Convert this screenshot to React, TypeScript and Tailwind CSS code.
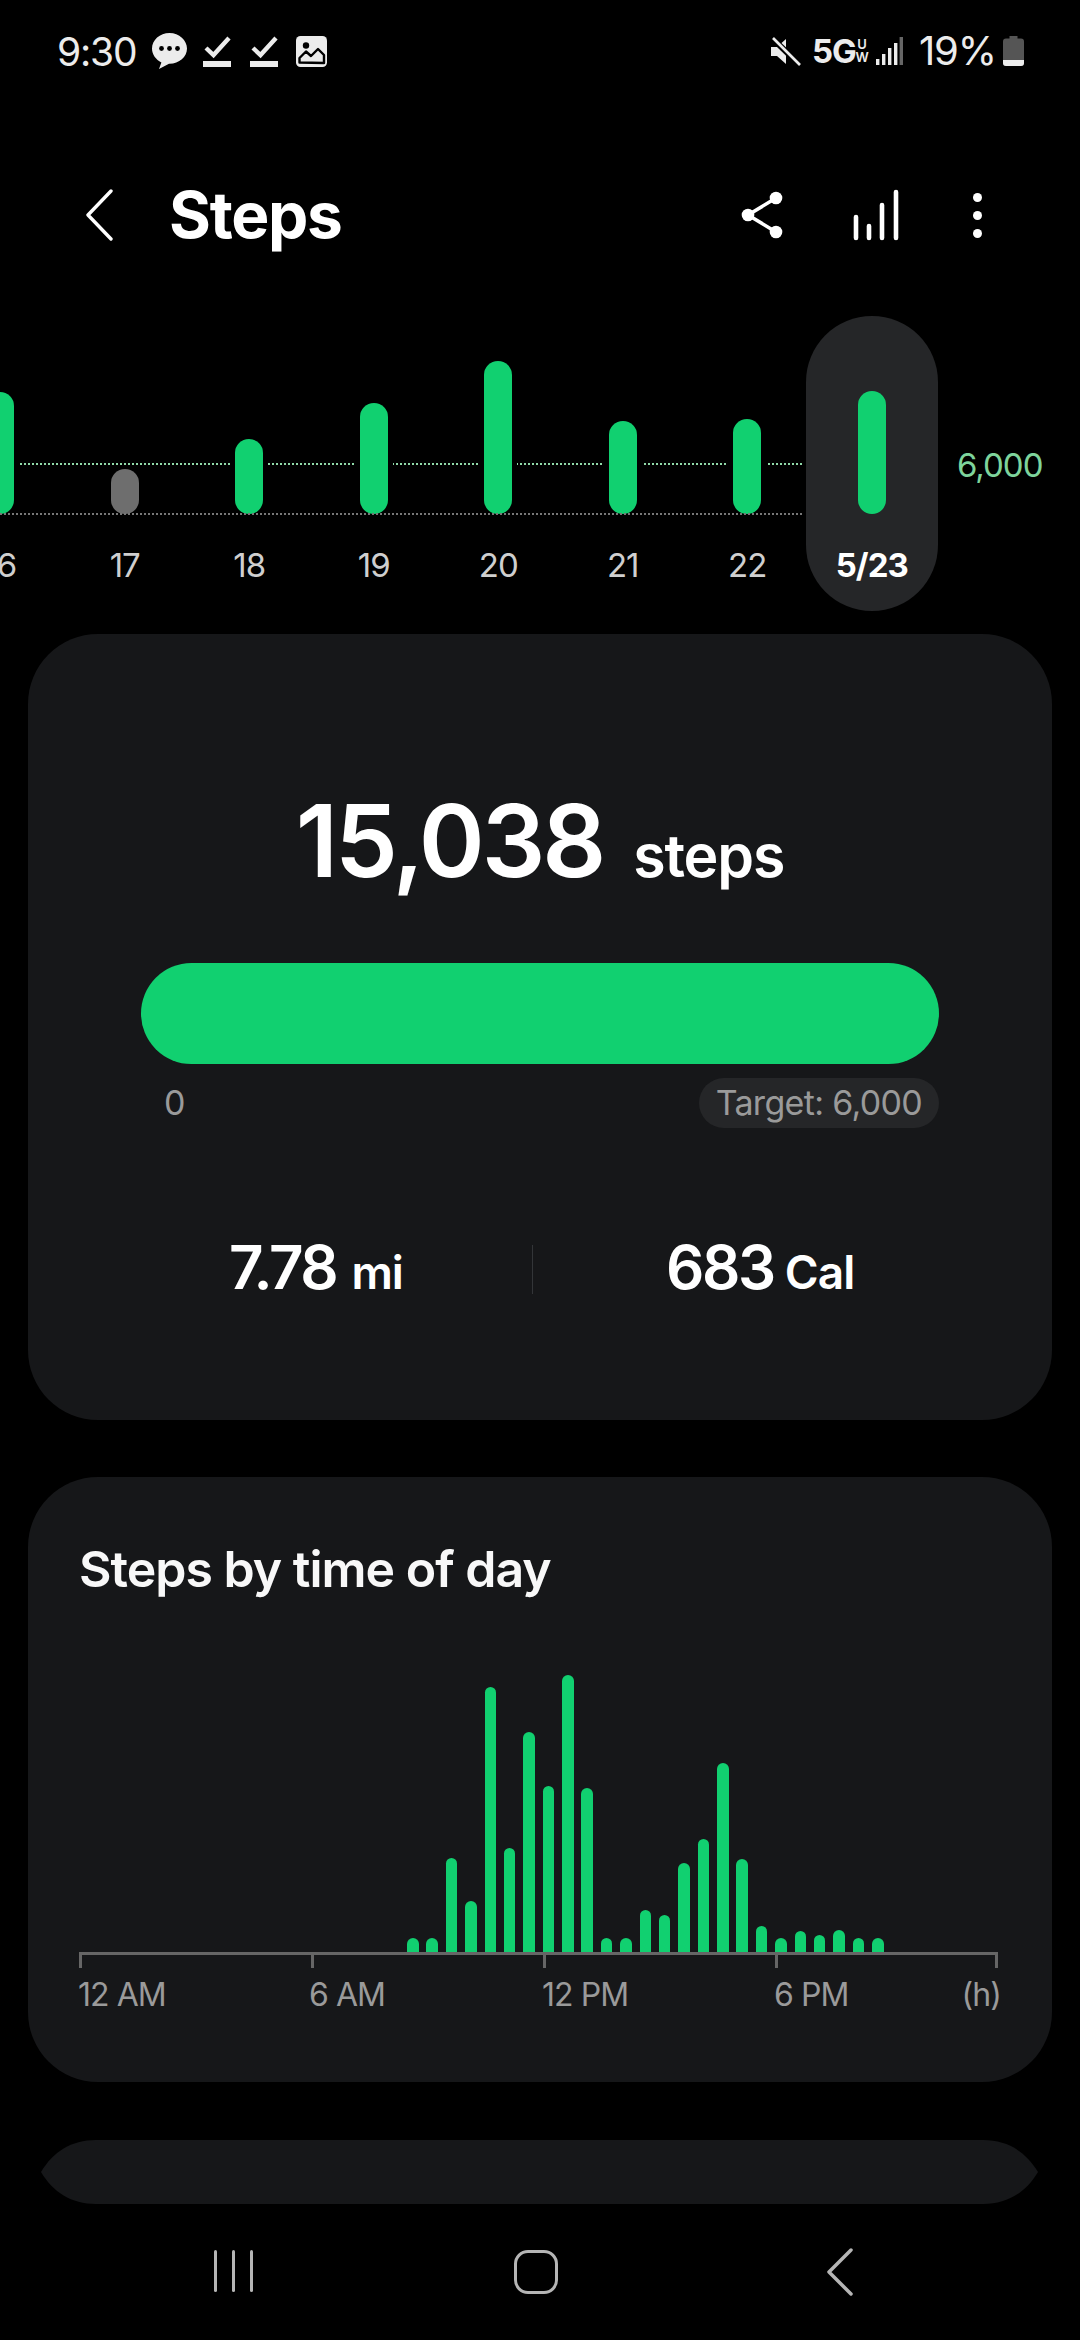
import React from 'react';

const dayBars = [
  { label: '16', top: 392 },
  { label: '17', top: 469, grey: true },
  { label: '18', top: 439 },
  { label: '19', top: 403 },
  { label: '20', top: 361 },
  { label: '21', top: 421 },
  { label: '22', top: 419 },
  { label: '5/23', top: 391, today: true },
];

const hourBars = [14, 14, 94, 51, 265, 104, 220, 166, 277, 164, 14, 14, 42, 37, 89, 113, 189, 93, 26, 14, 21, 17, 22, 14, 14];

const CheckIcon = ({ className }: { className?: string }) => (
  <svg width="28" height="32" viewBox="0 0 28 32" className={className}>
    <path d="M3 13l7.5 7L26 3" fill="none" stroke="#ececec" strokeWidth="4.4" />
    <rect y="26" width="28" height="6" fill="#ececec" />
  </svg>
);

const StatusBar = () => (
  <div className="h-[102px] pl-[57px] pr-[56px] flex items-center justify-between text-[#ececec]">
    <div className="flex items-center">
      <span className="text-[39px] leading-none tracking-[-0.03em] w-[80px]">9:30</span>
      <svg width="35" height="36" viewBox="0 0 35 36" className="ml-[15px]">
        <path d="M17.5 0C7.8 0 0 7 0 15.6c0 6 3.8 11.2 9.4 13.8L7 36l10-5.2c.2 0 .3 0 .5 0 9.7 0 17.5-6.9 17.5-15.2S27.2 0 17.5 0z" fill="#ececec" />
        <circle cx="9.5" cy="15.5" r="2.4" fill="#000" />
        <circle cx="17.5" cy="15.5" r="2.4" fill="#000" />
        <circle cx="25.5" cy="15.5" r="2.4" fill="#000" />
      </svg>
      <CheckIcon className="ml-[16px]" />
      <CheckIcon className="ml-[19px]" />
      <svg width="31" height="31" viewBox="0 0 31 31" className="ml-[18px]">
        <rect width="31" height="31" rx="4.5" fill="#ececec" />
        <circle cx="10" cy="9.5" r="3.2" fill="#000" />
        <path d="M3.5 26.5V22L10 15.5l5 4.5 7-7 6 6v8z" fill="#ececec" stroke="#000" strokeWidth="2.4" strokeLinejoin="round" />
      </svg>
    </div>
    <div className="flex items-center">
      <svg width="30" height="29" viewBox="0 0 30 29">
        <path d="M0 10h6l9-8v25l-9-8H0z" fill="#ececec" />
        <path d="M2 2l27 26" stroke="#000" strokeWidth="6" />
        <path d="M2 1l27 27" stroke="#ececec" strokeWidth="2.6" />
      </svg>
      <span className="ml-[11px] text-[33px] leading-none font-bold tracking-[-0.03em] w-[40px]">5G</span>
      <div className="ml-[4px] w-[12px] flex flex-col items-center text-[13px] leading-[13px] font-semibold">
        <span>U</span>
        <span>W</span>
      </div>
      <svg width="27" height="28" viewBox="0 0 27 28" className="ml-[8px]">
        <rect x="0" y="22" width="3.4" height="6" fill="#ececec" />
        <rect x="6" y="17" width="3.4" height="11" fill="#ececec" />
        <rect x="12" y="11" width="3.4" height="17" fill="#ececec" />
        <rect x="18" y="6" width="3.4" height="22" fill="#ececec" />
        <rect x="23.6" y="0" width="3.4" height="28" fill="#666" />
      </svg>
      <span className="ml-[16px] text-[40px] leading-none tracking-[-0.03em] w-[76px]">19%</span>
      <svg width="21" height="30" viewBox="0 0 21 30" className="ml-[8px]">
        <path d="M6.5 0h8v3h-8z" fill="#555" />
        <rect y="2.5" width="21" height="27.5" rx="3" fill="#555" />
        <path d="M0 24h21v3a3 3 0 0 1-3 3H3a3 3 0 0 1-3-3z" fill="#ececec" />
      </svg>
    </div>
  </div>
);

const Header = () => (
  <div className="h-[214px] pt-[12px] flex items-center text-white">
    <svg width="28" height="52" viewBox="0 0 28 52" className="ml-[85px]">
      <path d="M26 2L3 26l23 24" fill="none" stroke="#fff" strokeWidth="3.4" strokeLinecap="round" strokeLinejoin="round" />
    </svg>
    <h1 className="ml-[56px] text-[64px] leading-none font-bold tracking-[-0.02em]">Steps</h1>
    <div className="ml-auto flex items-center">
      <svg width="42" height="48" viewBox="0 0 42 48">
        <path d="M35 7L7 24l28 17" fill="none" stroke="#fff" strokeWidth="3.6" />
        <circle cx="35" cy="7" r="6.3" fill="#fff" />
        <circle cx="7" cy="24" r="6.3" fill="#fff" />
        <circle cx="35" cy="41" r="6.3" fill="#fff" />
      </svg>
      <svg width="48" height="52" viewBox="0 0 48 52" className="ml-[69px]">
        <path d="M4 49V28M17 49V37M30 49V16M44 49V3" fill="none" stroke="#fff" strokeWidth="4.6" strokeLinecap="round" />
      </svg>
      <div className="ml-[73px] mr-[98px] flex flex-col gap-[9px]">
        <div className="w-[9px] h-[9px] rounded-full bg-white" />
        <div className="w-[9px] h-[9px] rounded-full bg-white" />
        <div className="w-[9px] h-[9px] rounded-full bg-white" />
      </div>
    </div>
  </div>
);

const WeekChart = () => (
  <div className="relative h-[295px] flex">
    {/* target line and baseline */}
    <div className="absolute left-0 w-[802px] top-[147px] border-t-2 border-dotted border-[#8fd8a8]" />
    <div className="absolute left-0 w-[802px] top-[197px] z-10 border-t-2 border-dotted border-[#777]" />
    <div className="flex -ml-[62px]">
      {dayBars.map((d) => (
        <div key={d.label} className="relative w-[124.5px] h-full flex flex-col items-center">
          {d.today && <div className="absolute top-0 bottom-0 -left-[4px] -right-[4px] rounded-full bg-[#252628]" />}
          <div className="relative h-[198px] w-full flex items-end justify-center">
            <div
              className={`w-[28px] rounded-full ${d.grey ? 'bg-[#6e6e6e]' : 'bg-[#11d070] shadow-[5px_0_0_#000,-5px_0_0_#000]'} ${d.today ? 'shadow-none' : ''}`}
              style={{ height: 514 - d.top }}
            />
          </div>
          <span className={`relative mt-[31px] text-[33px] leading-[40px] tracking-[-0.03em] ${d.today ? 'font-bold text-white' : 'text-[#cfcfcf]'}`}>
            {d.label}
          </span>
        </div>
      ))}
    </div>
    <span className="absolute left-[957px] top-[132px] text-[33px] leading-[34px] tracking-[-0.03em] text-[#7ed49c]">6,000</span>
  </div>
);

const SummaryCard = () => (
  <div className="mt-[23px] mx-[28px] h-[786px] rounded-[70px] bg-[#161719] text-white flex flex-col">
    <div className="mt-[157px] flex items-baseline justify-center leading-none">
      <span className="text-[100px] font-semibold tracking-[-0.03em] leading-[100px]">15,038</span>
      <span className="ml-[30px] text-[59px] font-semibold tracking-[-0.02em]">steps</span>
    </div>
    <div className="mt-[72px] mx-[113px] h-[101px] rounded-full bg-[#11d070]" />
    <div className="mt-[13px] mx-[113px] flex items-center justify-between text-[34px] tracking-[-0.02em] text-[#9a9a9a]">
      <span className="ml-[23px]">0</span>
      <span className="h-[50px] px-[17px] rounded-full bg-[#252628] flex items-center">Target: 6,000</span>
    </div>
    <div className="mt-[114px] flex items-center">
      <div className="w-[504px] flex items-baseline justify-end pr-[129px]">
        <span className="text-[60px] font-semibold tracking-[-0.04em] leading-[50px]">7.78</span>
        <span className="ml-[15px] text-[46px] font-semibold tracking-[-0.02em] leading-[50px]">mi</span>
      </div>
      <div className="w-[1px] h-[49px] bg-[#333538]" />
      <div className="flex items-baseline ml-[133px]">
        <span className="text-[60px] font-semibold tracking-[-0.04em] leading-[50px]">683</span>
        <span className="ml-[11px] text-[46px] font-semibold tracking-[-0.02em] leading-[50px]">Cal</span>
      </div>
    </div>
  </div>
);

const TimeOfDayCard = () => (
  <div className="mt-[57px] mx-[28px] h-[605px] rounded-[70px] bg-[#161719] text-white px-[51px] flex flex-col">
    <h2 className="mt-[62px] text-[50px] leading-[60px] font-semibold tracking-[-0.02em] text-[#f8f8f8]">Steps by time of day</h2>
    <div className="mt-[72px] h-[281px] pl-[328px] flex items-end gap-[7.875px]">
      {hourBars.map((h, i) => (
        <div key={i} className="w-[11.5px] rounded-t-full bg-[#11d070]" style={{ height: h }} />
      ))}
    </div>
    {/* axis with ticks */}
    <div className="w-[919px] h-[16px] border-t-[3px] border-x-[3px] border-[#666] relative flex">
      <div className="ml-[229px] w-[3px] h-full bg-[#666]" />
      <div className="ml-[229px] w-[3px] h-full bg-[#666]" />
      <div className="ml-[229px] w-[3px] h-full bg-[#666]" />
    </div>
    <div className="mt-[7px] w-[923px] -ml-[1px] relative flex text-[32px] leading-[40px] tracking-[-0.03em] text-[#9a9a9a]">
      <span className="w-[231px]">12 AM</span>
      <span className="w-[233px]">6 AM</span>
      <span className="w-[232px]">12 PM</span>
      <span>6 PM</span>
      <span className="ml-auto">(h)</span>
    </div>
  </div>
);

const NavBar = () => (
  <div className="flex-1 flex items-start relative">
    <div className="mt-[46px] ml-[214px] flex gap-[15px]">
      <div className="w-[3px] h-[42px] rounded-full bg-[#b5b5b5]" />
      <div className="w-[3px] h-[42px] rounded-full bg-[#b5b5b5]" />
      <div className="w-[3px] h-[42px] rounded-full bg-[#b5b5b5]" />
    </div>
    <div className="mt-[46px] ml-[261px] w-[44px] h-[44px] rounded-[14px] border-[3.5px] border-[#b5b5b5]" />
    <svg width="26" height="48" viewBox="0 0 26 48" className="mt-[44px] ml-[269px]">
      <path d="M24 2L2 24l22 22" fill="none" stroke="#b5b5b5" strokeWidth="3.5" strokeLinecap="round" strokeLinejoin="round" />
    </svg>
  </div>
);

export default function App() {
  return (
    <div className="w-[1080px] h-[2340px] bg-black overflow-hidden flex flex-col [font-family:Inter,sans-serif]">
      <StatusBar />
      <Header />
      <WeekChart />
      <SummaryCard />
      <TimeOfDayCard />
      {/* next card, cut off by the nav bar */}
      <div className="mt-[58px] ml-[41px] w-[997px] h-[64px] shrink-0 bg-[#161719] [clip-path:path('M0_32C12_12_30_0_55_0H942C967_0_985_12_997_32C985_52_967_64_942_64H55C30_64_12_52_0_32Z')]" />
      <NavBar />
    </div>
  );
}
